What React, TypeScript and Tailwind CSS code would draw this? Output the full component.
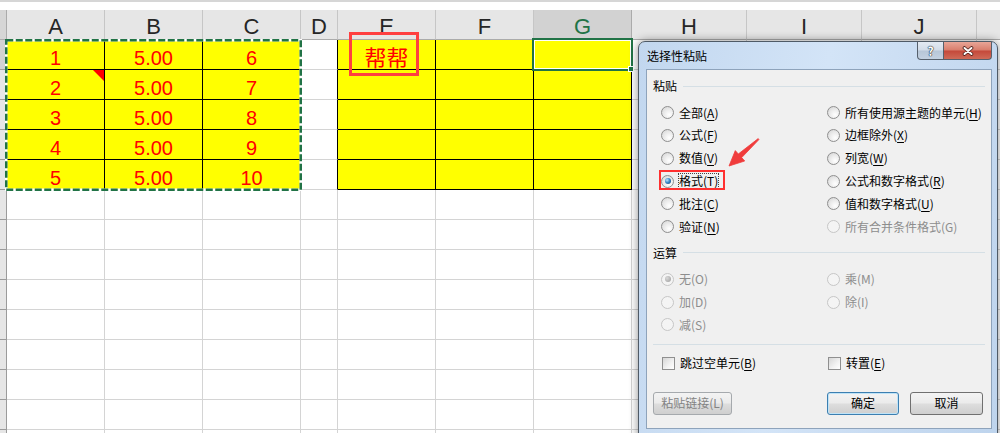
import React from 'react';

type Col = { key: string; w: string; label?: string };

const COLS: Col[] = [
  { key: 'A', w: 'w-[98px]' },
  { key: 'B', w: 'w-[98px]' },
  { key: 'C', w: 'w-[98px]' },
  { key: 'D', w: 'w-[37px]' },
  { key: 'E', w: 'w-[98px]' },
  { key: 'F', w: 'w-[98px]' },
  { key: 'G', w: 'w-[98px]' },
  { key: 'H', w: 'w-[115px]' },
  { key: 'I', w: 'w-[115px]' },
  { key: 'J', w: 'w-[115px]' },
  { key: 'K', w: 'w-[120px]', label: '' },
];

const VALUES: Record<string, string[]> = {
  A: ['1', '2', '3', '4', '5'],
  B: ['5.00', '5.00', '5.00', '5.00', '5.00'],
  C: ['6', '7', '8', '9', '10'],
};

const YELLOW = ['A', 'B', 'C', 'E', 'F', 'G'];
const ROWS = 14;

const cellColors = (col: string, row: number) => {
  if (row < 5 && YELLOW.includes(col)) return 'bg-[#ffff00] border-black';
  if (row < 5 && col === 'D') return 'bg-white border-b-[#d4d4d4] border-r-black';
  return 'bg-white border-[#d4d4d4]';
};

const Sheet = () => (
  <div className="flex flex-col font-['Liberation_Sans',Arial,sans-serif]">
    <div className="h-[10px] bg-white">
      <div className="h-[2px] bg-[#d6d6d6]" />
    </div>
    <div className="flex">
      <div className="h-[30px] w-[7px] shrink-0 border-r border-b border-[#ababab] bg-[#d6d6d6]" />
      {COLS.map((c) => (
        <div
          key={c.key}
          className={`${c.w} h-[30px] shrink-0 border-r border-b pt-[7px] text-center text-[22px] leading-[20px] ${
            c.key === 'G'
              ? 'bg-[#d2d2d2] text-[#217346] border-r-[#ababab] border-b-[#ababab]'
              : 'bg-[#e6e6e6] text-[#262626] border-r-[#c6c6c6] border-b-[#ababab]'
          }`}
        >
          {c.label ?? c.key}
        </div>
      ))}
    </div>
    {Array.from({ length: ROWS }).map((_, r) => (
      <div key={r} className="flex">
        <div
          className={`h-[30px] w-[7px] shrink-0 border-b ${
            r === 0
              ? 'border-r-2 border-r-[#217346] border-b-[#9b9b9b] bg-[#d2d2d2]'
              : 'border-r border-[#9b9b9b] bg-[#e6e6e6]'
          }`}
        />
        {COLS.map((c) => {
          const bang = c.key === 'E' && r === 0;
          return (
            <div
              key={c.key}
              className={`${c.w} h-[30px] shrink-0 border-r border-b text-center text-[#ff0000] ${cellColors(c.key, r)} ${
                bang
                  ? "pt-[4px] font-['Noto_Sans_CJK_SC',sans-serif] text-[22px] leading-[24px]"
                  : 'pt-[8px] text-[20px] leading-[20px]'
              }`}
            >
              {bang ? '帮帮' : VALUES[c.key]?.[r]}
            </div>
          );
        })}
      </div>
    ))}
  </div>
);

const Radio = ({ checked, disabled }: { checked?: boolean; disabled?: boolean }) => (
  <span
    className={`flex h-[13px] w-[13px] shrink-0 items-center justify-center rounded-full border ${
      disabled
        ? 'border-[#c6c6c6] bg-[#f4f4f4]'
        : 'border-[#8f8f8f] bg-[radial-gradient(circle_at_65%_70%,#ffffff_0%,#e8e8e8_55%,#d0d0d0_100%)]'
    }`}
  >
    {checked && (
      <span
        className={`h-[6px] w-[6px] rounded-full ${
          disabled
            ? 'bg-[radial-gradient(circle_at_35%_35%,#d8d8d8_0%,#9c9c9c_100%)]'
            : 'bg-[radial-gradient(circle_at_35%_35%,#bfe6fc_0%,#3b8bcb_45%,#0e3b6b_100%)]'
        }`}
      />
    )}
  </span>
);

const CheckBox = () => (
  <span className="h-[13px] w-[13px] shrink-0 border border-[#8f8f8f] bg-[linear-gradient(135deg,#d6d6d6_0%,#f2f2f2_60%,#ffffff_100%)]" />
);

type Opt = { text: string; k?: string; checked?: boolean; disabled?: boolean; focus?: boolean };

const Label = ({ text, k, disabled, focus }: Opt) => (
  <span
    className={`whitespace-nowrap ${disabled ? 'text-[#8d8d8d]' : 'text-black'} ${
      focus ? 'leading-[14px] outline-1 outline-dotted outline-[#444]' : 'leading-[16px]'
    }`}
  >
    {text}
    {k && (
      <>
        (
        {disabled ? k : <span className="underline underline-offset-[2px]">{k}</span>})
      </>
    )}
  </span>
);

const Option = (o: Opt) => (
  <div className="relative flex h-[22.8px] items-center gap-[5px]">
    <Radio checked={o.checked} disabled={o.disabled} />
    <Label {...o} />
    {o.focus && <span className="absolute left-[-2px] top-0 h-[20px] w-[66px] border-2 border-[#ff3030]" />}
  </div>
);

const PASTE: Opt[] = [
  { text: '全部', k: 'A' },
  { text: '所有使用源主题的单元', k: 'H' },
  { text: '公式', k: 'F' },
  { text: '边框除外', k: 'X' },
  { text: '数值', k: 'V' },
  { text: '列宽', k: 'W' },
  { text: '格式', k: 'T', checked: true, focus: true },
  { text: '公式和数字格式', k: 'R' },
  { text: '批注', k: 'C' },
  { text: '值和数字格式', k: 'U' },
  { text: '验证', k: 'N' },
  { text: '所有合并条件格式', k: 'G', disabled: true },
];

const OPERATION: Opt[] = [
  { text: '无', k: 'O', checked: true, disabled: true },
  { text: '乘', k: 'M', disabled: true },
  { text: '加', k: 'D', disabled: true },
  { text: '除', k: 'I', disabled: true },
  { text: '减', k: 'S', disabled: true },
];

const GroupTitle = ({ children }: { children: React.ReactNode }) => (
  <div className="flex h-[18px] items-center gap-[6px]">
    <span className="leading-[16px] text-black">{children}</span>
    <span className="h-px flex-1 bg-[#d5dfe5]" />
  </div>
);

const BTN =
  'flex h-[23px] items-center justify-center rounded-[3px] border bg-[linear-gradient(180deg,#f3f3f3_0%,#ebebeb_48%,#dddddd_52%,#cfcfcf_100%)]';

const Dialog = () => (
  <div className="absolute left-[638px] top-[41px] h-[400px] w-[360px] rounded-t-[7px] border border-[#4f5a66] bg-[linear-gradient(100deg,#c2d7ef_0%,#d3e4f7_45%,#c9dcf2_70%,#bed4ed_100%)] font-['Noto_Sans_CJK_SC','Microsoft_YaHei',sans-serif] text-[12px] shadow-[0_0_10px_rgba(0,0,0,0.45)]">
    <div className="flex h-[27px] items-start">
      <div className="flex h-full items-center pl-[8px] text-black">选择性粘贴</div>
      <div className="ml-auto mr-[5px] flex">
        <div className="flex h-[18px] w-[27px] items-center justify-center rounded-bl-[4px] border border-t-0 border-[#56606c] bg-[linear-gradient(180deg,#e3eaf3_0%,#d2dce8_48%,#b7c6d7_52%,#c3d1e1_100%)] text-[12px] font-bold leading-none text-white [text-shadow:0_0_1px_#1f2a36,0_0_1px_#1f2a36,0_0_1px_#1f2a36]">
          ?
        </div>
        <div className="flex h-[18px] w-[48px] items-center justify-center rounded-br-[4px] border border-t-0 border-l-0 border-[#56606c] bg-[linear-gradient(180deg,#e8a597_0%,#d87d6c_48%,#c4483a_52%,#cf6a57_100%)]">
          <svg width="14" height="10" viewBox="0 0 14 10">
            <path d="M3.5 2 L10.5 8 M10.5 2 L3.5 8" stroke="#4a1f1a" strokeWidth="3.6" strokeLinecap="round" />
            <path d="M3.5 2 L10.5 8 M10.5 2 L3.5 8" stroke="#ffffff" strokeWidth="2" strokeLinecap="round" />
          </svg>
        </div>
      </div>
    </div>

    <div className="ml-[7px] flex h-[360px] w-[346px] flex-col border border-[#8ea3bb] bg-[#f0f0f0] px-[6px] pt-[7px]">
      <GroupTitle>粘贴</GroupTitle>
      <div className="mt-[6.3px] grid grid-cols-[166px_1fr] pl-[8px]">
        {PASTE.map((o) => (
          <Option key={o.text} {...o} />
        ))}
      </div>

      <div className="mt-[5.9px]">
        <GroupTitle>运算</GroupTitle>
      </div>
      <div className="mt-[5.9px] grid grid-cols-[166px_1fr] pl-[8px]">
        {OPERATION.map((o) => (
          <Option key={o.text} {...o} />
        ))}
      </div>

      <div className="mt-[7.7px] h-px bg-[#d5dfe5]" />

      <div className="mt-[6.9px] grid grid-cols-[166px_1fr] pl-[9px]">
        <div className="flex h-[22.8px] items-center gap-[5px]">
          <CheckBox />
          <Label text="跳过空单元" k="B" />
        </div>
        <div className="flex h-[22.8px] items-center gap-[5px]">
          <CheckBox />
          <Label text="转置" k="E" />
        </div>
      </div>

      <div className="mt-[17px] flex pr-[2px]">
        <div className={`${BTN} w-[79px] border-[#a5a9ad] text-[#838383]`}>粘贴链接(L)</div>
        <div className={`${BTN} ml-auto w-[72px] border-[#3c7fb1] text-black shadow-[inset_0_0_0_1px_#bfe3f7]`}>确定</div>
        <div className={`${BTN} ml-[11px] w-[73px] border-[#707070] text-black`}>取消</div>
      </div>
    </div>
  </div>
);

export default function App() {
  return (
    <div className="relative h-[433px] w-[1000px] overflow-hidden bg-white">
      <Sheet />

      {/* copy range marching ants */}
      <svg className="absolute left-[5px] top-[39px]" width="297" height="152">
        <rect x="1.25" y="1.25" width="294.5" height="149.5" fill="none" stroke="#ffffff" strokeWidth="2.5" />
        <rect
          x="1.25"
          y="1.25"
          width="294.5"
          height="149.5"
          fill="none"
          stroke="#217346"
          strokeWidth="2.5"
          strokeDasharray="7 2.5"
        />
      </svg>

      {/* comment marker */}
      <svg className="absolute left-[93px] top-[70px]" width="11" height="11">
        <polygon points="0,0 11,0 11,11" fill="#ff0000" />
      </svg>

      <div className="absolute left-[349px] top-[32px] h-[44px] w-[70px] border-[3px] border-[#ff4040]" />

      {/* active cell G1 */}
      <div className="absolute left-[532px] top-[38px] h-[33px] w-[101px] border-2 border-[#217346] shadow-[inset_0_0_0_1px_#ffffff]" />
      <div className="absolute left-[628px] top-[66px] h-[6px] w-[6px] border border-white bg-[#217346]" />

      <Dialog />

      <svg className="absolute left-[720px] top-[130px]" width="45" height="45">
        <polygon
          points="38.2,8.6 18.3,24 15.3,20.6 9,36 24.7,31 21.7,27.6 38.9,9.6"
          fill="#f03c3c"
          stroke="#f03c3c"
          strokeWidth="0.8"
          strokeLinejoin="round"
        />
      </svg>
    </div>
  );
}
